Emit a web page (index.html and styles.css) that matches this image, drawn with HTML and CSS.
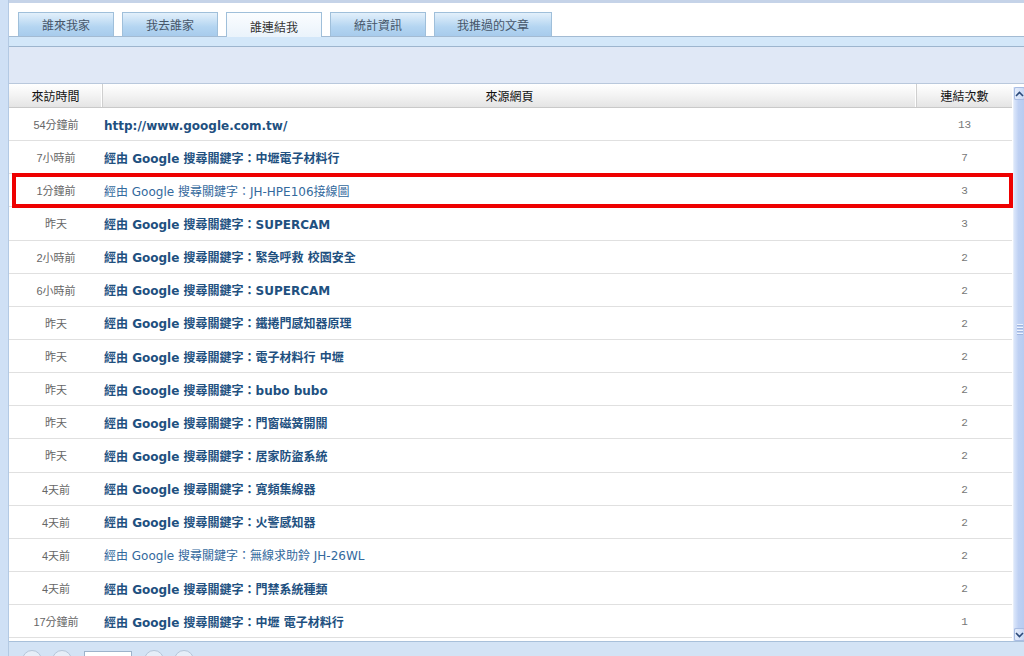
FILE: index.html
```html
<!DOCTYPE html>
<html lang="zh-Hant">
<head>
<meta charset="utf-8">
<title>誰連結我</title>
<link rel="stylesheet" href="styles.css">
</head>
<body>
<div class="page">
  <div class="side"></div>
  <div class="main">
    <div class="topline"></div>
    <div class="tabbar">
      <div class="tab">誰來我家</div>
      <div class="tab">我去誰家</div>
      <div class="tab active">誰連結我</div>
      <div class="tab">統計資訊</div>
      <div class="tab">我推過的文章</div>
    </div>
    <div class="band"></div>
    <div class="toolbar"></div>
    <div class="gridwrap">
      <div class="table">
        <div class="thead">
          <div class="th">來訪時間</div>
          <div class="th">來源網頁</div>
          <div class="th last">連結次數</div>
        </div>
        <div class="row"><div class="time">54分鐘前</div><div class="src url">http://www.google.com.tw/</div><div class="cnt">13</div></div>
        <div class="row"><div class="time">7小時前</div><div class="src">經由 Google 搜尋關鍵字：中壢電子材料行</div><div class="cnt">7</div></div>
        <div class="row marked"><div class="time">1分鐘前</div><div class="src light">經由 Google 搜尋關鍵字：JH-HPE106接線圖</div><div class="cnt">3</div></div>
        <div class="row"><div class="time">昨天</div><div class="src">經由 Google 搜尋關鍵字：SUPERCAM</div><div class="cnt">3</div></div>
        <div class="row"><div class="time">2小時前</div><div class="src">經由 Google 搜尋關鍵字：緊急呼救 校園安全</div><div class="cnt">2</div></div>
        <div class="row"><div class="time">6小時前</div><div class="src">經由 Google 搜尋關鍵字：SUPERCAM</div><div class="cnt">2</div></div>
        <div class="row"><div class="time">昨天</div><div class="src">經由 Google 搜尋關鍵字：鐵捲門感知器原理</div><div class="cnt">2</div></div>
        <div class="row"><div class="time">昨天</div><div class="src">經由 Google 搜尋關鍵字：電子材料行 中壢</div><div class="cnt">2</div></div>
        <div class="row"><div class="time">昨天</div><div class="src">經由 Google 搜尋關鍵字：bubo bubo</div><div class="cnt">2</div></div>
        <div class="row"><div class="time">昨天</div><div class="src">經由 Google 搜尋關鍵字：門窗磁簧開關</div><div class="cnt">2</div></div>
        <div class="row"><div class="time">昨天</div><div class="src">經由 Google 搜尋關鍵字：居家防盜系統</div><div class="cnt">2</div></div>
        <div class="row"><div class="time">4天前</div><div class="src">經由 Google 搜尋關鍵字：寬頻集線器</div><div class="cnt">2</div></div>
        <div class="row"><div class="time">4天前</div><div class="src">經由 Google 搜尋關鍵字：火警感知器</div><div class="cnt">2</div></div>
        <div class="row"><div class="time">4天前</div><div class="src light">經由 Google 搜尋關鍵字：無線求助鈴 JH-26WL</div><div class="cnt">2</div></div>
        <div class="row"><div class="time">4天前</div><div class="src">經由 Google 搜尋關鍵字：門禁系統種類</div><div class="cnt">2</div></div>
        <div class="row"><div class="time">17分鐘前</div><div class="src">經由 Google 搜尋關鍵字：中壢 電子材料行</div><div class="cnt">1</div></div>
      </div>
      <div class="scroll">
        <div class="sbtn"><svg width="9" height="6" viewBox="0 0 9 6"><path d="M1 5 L4.5 1.5 L8 5" fill="none" stroke="#2c4a7a" stroke-width="1.6"/></svg></div>
        <div class="track"><div class="grip"><span></span><span></span><span></span><span></span></div></div>
        <div class="sbtn"><svg width="9" height="6" viewBox="0 0 9 6"><path d="M1 1 L4.5 4.5 L8 1" fill="none" stroke="#2c4a7a" stroke-width="1.6"/></svg></div>
      </div>
    </div>
    <div class="pager">
      <div class="pbtn"></div>
      <div class="pbtn"></div>
      <div class="pinput"></div>
      <div class="pbtn"></div>
      <div class="pbtn"></div>
    </div>
  </div>
</div>
</body>
</html>
```
FILE: styles.css
```css
html, body {
  margin: 0;
  padding: 0;
  background: #ffffff;
}
body {
  width: 1024px;
  height: 656px;
  overflow: hidden;
  font-family: "Noto Sans CJK TC", sans-serif;
}
.page {
  display: flex;
  height: 656px;
}
.side {
  width: 8px;
  flex: 0 0 8px;
  background: #cfe0f5;
  border-right: 1px solid #b3c9e3;
}
.main {
  flex: 1;
  display: flex;
  flex-direction: column;
  min-width: 0;
}
.topline {
  height: 3px;
  background: #c5d3e8;
}
.tabbar {
  height: 33px;
  display: flex;
  align-items: flex-end;
  gap: 8px;
  padding-left: 9px;
  background: #ffffff;
}
.tab {
  height: 23px;
  padding: 0 23px;
  border: 1px solid #9fbfda;
  border-bottom: none;
  background: linear-gradient(#e3f0fb, #b4d5f1 60%, #a7cbec);
  font-size: 12px;
  line-height: 24px;
  color: #46566a;
  text-align: center;
}
.tab:last-child {
  padding: 0 22px;
}
.tab.active {
  height: 24px;
  margin-bottom: -1px;
  position: relative;
  background: linear-gradient(#fbfdff, #eaf3fb);
  line-height: 28px;
  color: #333;
}
.band {
  height: 9px;
  background: #d3e7f9;
  border-top: 1px solid #a3bbd3;
  border-bottom: 1px solid #9db5ce;
}
.toolbar {
  height: 36px;
  background: #e0e8f6;
  border-bottom: 1px solid #b9c8dc;
}
.gridwrap {
  display: flex;
  height: 557px;
  background: #ffffff;
}
.table {
  width: 1003px;
  flex: 0 0 1003px;
}
.thead {
  display: grid;
  grid-template-columns: 94px 814px 95px;
  height: 23px;
  border-bottom: 1px solid #c9c9c9;
  background: linear-gradient(#ffffff, #f3f3f3 50%, #e4e4e4);
}
.th {
  font-size: 12px;
  line-height: 23px;
  text-align: center;
  color: #111;
  border-right: 1px solid #cfcfcf;
  box-shadow: inset -1px 0 0 #ffffff;
}
.th.last {
  border-right: none;
  box-shadow: none;
}
.row {
  display: grid;
  grid-template-columns: 94px 814px 95px;
  height: 32.15px;
  border-bottom: 1px solid #e0e0e0;
  align-items: center;
}
.row.marked {
  position: relative;
}
.row.marked::after {
  content: "";
  position: absolute;
  left: 3px;
  right: -1px;
  top: -1px;
  bottom: -2px;
  border: 4px solid #ee0000;
}
.time {
  font-family: "Liberation Sans", "Noto Sans CJK TC", sans-serif;
  font-size: 11px;
  color: #666;
  text-align: center;
}
.src {
  font-family: "DejaVu Sans", "Noto Sans CJK TC", sans-serif;
  font-size: 12px;
  font-weight: bold;
  color: #21507f;
  padding-left: 1px;
  white-space: nowrap;
}
.src.url {
  padding-top: 4px;
}
.src.light {
  font-weight: normal;
  color: #33699d;
}
.cnt {
  font-family: "Liberation Mono", monospace;
  font-size: 11px;
  padding-top: 2px;
  color: #777;
  text-align: center;
}
.scroll {
  width: 11px;
  flex: 0 0 11px;
  margin-left: 1px;
  margin-top: 3px;
  height: 554px;
  display: flex;
  flex-direction: column;
  background: #c3d4f4;
  border-left: 1px solid #e6eefb;
}
.sbtn {
  height: 13px;
  flex: 0 0 13px;
  display: flex;
  align-items: center;
  justify-content: center;
  background: linear-gradient(90deg, #e4ecfb, #c8d8f5);
  border: 1px solid #a9bde3;
  border-radius: 2px;
  box-sizing: border-box;
}
.track {
  flex: 1;
  display: flex;
  align-items: center;
  justify-content: center;
  background: linear-gradient(90deg, #dbe6fa, #bfd1f3 40%, #b7cbf1);
}
.grip {
  display: flex;
  flex-direction: column;
  gap: 1px;
  margin-top: -70px;
}
.grip span {
  display: block;
  width: 6px;
  height: 1px;
  background: #eef3fd;
  border-bottom: 1px solid #9fb5e0;
}
.pager {
  height: 14px;
  overflow: hidden;
  display: flex;
  gap: 10px;
  padding-left: 13px;
  background: #d3e3f5;
  border-top: 1px solid #a8c0da;
}
.pbtn {
  width: 18px;
  height: 18px;
  margin-top: 8px;
  border-radius: 50%;
  border: 1px solid #b5c6d9;
  background: #e6eef8;
  flex: 0 0 auto;
}
.pinput {
  width: 46px;
  height: 20px;
  margin-top: 9px;
  margin-left: 2px;
  margin-right: 2px;
  border: 1px solid #9db3cb;
  background: #ffffff;
}
```
